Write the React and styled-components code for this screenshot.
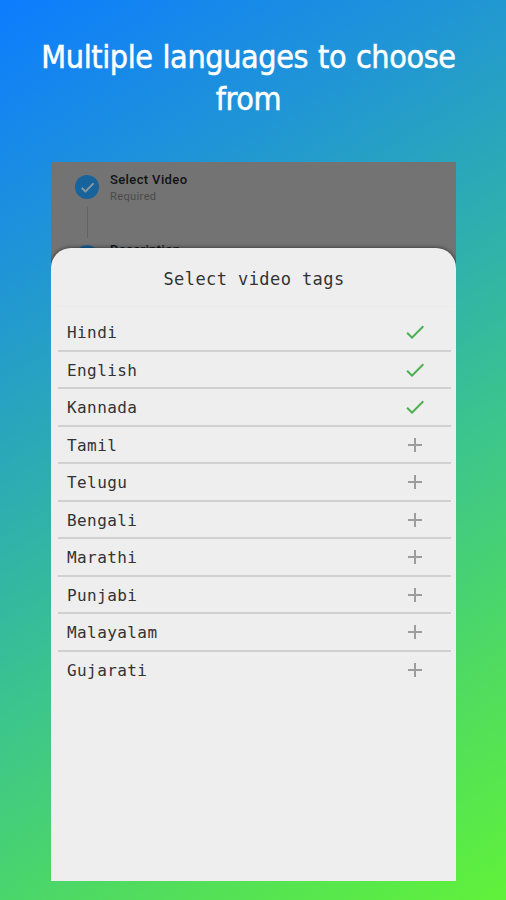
import React, { useState } from "react"
import styled, { createGlobalStyle } from "styled-components"


const GlobalStyle = createGlobalStyle`
  body {
    margin: 0;
  }
  * {
    box-sizing: border-box;
  }
`

const Page = styled.div`
  width: 506px;
  height: 900px;
  padding: 36px 50px 0 51px;
  overflow: hidden;
  background: linear-gradient(149deg, #0d7cff 0%, #2196d4 24%, #3cc58c 60%, #50db60 80%, #60f23a 100%);
`

const Headline = styled.h1`
  height: 126px;
  margin: 0 -30px 0 -40px;
  color: #fff;
  font-family: "DejaVu Sans Condensed", "DejaVu Sans", sans-serif;
  font-stretch: condensed;
  font-size: 32px;
  font-weight: 400;
  line-height: 42px;
  letter-spacing: -0.37px;
  word-spacing: 1px;
  text-align: center;
  -webkit-text-stroke: 0.5px #fff;
`

const Phone = styled.div`
  height: 719px;
  display: flex;
  flex-direction: column;
  overflow: hidden;
  background: #737373;
`

const Steps = styled.div`
  height: 86px;
  flex-shrink: 0;
  padding: 9px 0 0 24px;
  overflow: hidden;
`

const Step = styled.div`
  height: 70px;
  display: flex;
  gap: 11px;
`

const StepMarker = styled.div`
  width: 24px;
  display: flex;
  flex-direction: column;
  align-items: center;
  padding-top: 4px;
`

const StepDot = styled.div`
  width: 24px;
  height: 24px;
  flex-shrink: 0;
  display: flex;
  align-items: center;
  justify-content: center;
  border-radius: 50%;
  background: #17639c;
`

const StepLine = styled.div`
  width: 1px;
  height: 31px;
  margin-top: 8px;
  background: #626262;
`

const StepTitle = styled.div`
  color: #121212;
  font-family: Roboto, sans-serif;
  font-size: 13px;
  font-weight: 500;
  line-height: 18px;
  letter-spacing: 0.38px;
`

const StepHint = styled.div`
  color: #4a4a4a;
  font-family: Roboto, sans-serif;
  font-size: 11px;
  line-height: 16px;
  letter-spacing: 0.4px;
`

const Sheet = styled.div`
  flex-grow: 1;
  padding-top: 14px;
  border-radius: 20px 20px 0 0;
  background: #eee;
  box-shadow: 0 0 4px rgba(0, 0, 0, 0.65);
  color: #333;
  font-family: "DejaVu Sans Mono", monospace;
`

const SheetTitle = styled.div`
  height: 45px;
  margin: 0 5px 7px 7px;
  padding-right: 1px;
  border-bottom: 1px solid #eaeaea;
  font-size: 17px;
  line-height: 35px;
  letter-spacing: 0.42px;
  text-align: center;
`

const TagList = styled.div`
  margin: 0 5px 0 7px;
`

const Tag = styled.div`
  height: 37.5px;
  display: flex;
  align-items: center;
  justify-content: space-between;
  padding: 1px 24px 0 9px;
  border-bottom: 2px solid ${props => props.$last ? "transparent" : "#d0d0d0"};
  font-size: 16px;
  line-height: 20px;
  letter-spacing: 0.42px;
  cursor: pointer;
`

const TagName = styled.span`
  padding-top: 2px;
`

const TagIcon = styled.svg`
  width: 24px;
  height: 24px;
  fill: ${props => props.$active ? "#4caf50" : "#9c9c9c"};
`

const CHECK = "M9 16.17L4.83 12l-1.42 1.41L9 19 21 7l-1.41-1.41z"
const PLUS = "M19 13h-6v6h-2v-6H5v-2h6V5h2v6h6v2z"

const LANGUAGES = [
  "Hindi", "English", "Kannada", "Tamil", "Telugu",
  "Bengali", "Marathi", "Punjabi", "Malayalam", "Gujarati"
]

const STEPS = [
  { title: "Select Video", hint: "Required" },
  { title: "Description" }
]


const App = () => {
  const [selected, setSelected] = useState(["Hindi", "English", "Kannada"])

  const toggleTag = (tag) => {
    if (selected.includes(tag)) {
      setSelected(selected.filter(t => t !== tag))
    } else {
      setSelected([...selected, tag])
    }
  }

  return (
    <Page>
      <GlobalStyle />
      <Headline>Multiple languages to choose<br />from</Headline>
      <Phone>
        <Steps>
          {STEPS.map(step =>
            <Step key={step.title}>
              <StepMarker>
                <StepDot>
                  <svg width="17" height="17" viewBox="0 0 24 24" fill="#8d9aa3" stroke="#8d9aa3"><path d={CHECK} /></svg>
                </StepDot>
                <StepLine />
              </StepMarker>
              <div>
                <StepTitle>{step.title}</StepTitle>
                {step.hint && <StepHint>{step.hint}</StepHint>}
              </div>
            </Step>
          )}
        </Steps>
        <Sheet>
          <SheetTitle>Select video tags</SheetTitle>
          <TagList>
            {LANGUAGES.map((tag, i) =>
              <Tag key={tag} $last={i === LANGUAGES.length - 1} onClick={() => toggleTag(tag)}>
                <TagName>{tag}</TagName>
                <TagIcon viewBox="0 0 24 24" $active={selected.includes(tag)}>
                  <path d={selected.includes(tag) ? CHECK : PLUS} />
                </TagIcon>
              </Tag>
            )}
          </TagList>
        </Sheet>
      </Phone>
    </Page>
  )
}

export default App
